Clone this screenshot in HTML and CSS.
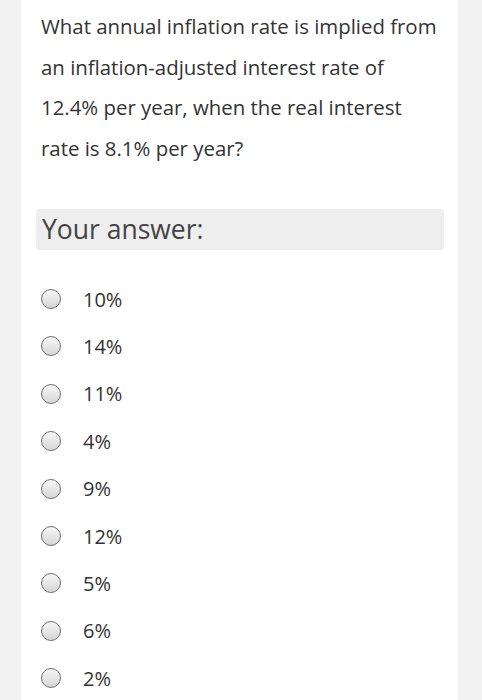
FILE: index.html
```html
<!DOCTYPE html>
<html>
<head>
<meta charset="utf-8">
<link rel="stylesheet" href="styles.css">
</head>
<body>
<div class="page">
  <div class="card">
    <p class="question">What annual inflation rate is implied from an inflation-adjusted interest rate of 12.4% per year, when the real interest rate is 8.1% per year?</p>
    <div class="answer-box">Your answer:</div>
    <ul class="options">
      <li class="option"><span class="radio"></span><span class="label">10%</span></li>
      <li class="option"><span class="radio"></span><span class="label">14%</span></li>
      <li class="option"><span class="radio"></span><span class="label">11%</span></li>
      <li class="option"><span class="radio"></span><span class="label">4%</span></li>
      <li class="option"><span class="radio"></span><span class="label">9%</span></li>
      <li class="option"><span class="radio"></span><span class="label">12%</span></li>
      <li class="option"><span class="radio"></span><span class="label">5%</span></li>
      <li class="option"><span class="radio"></span><span class="label">6%</span></li>
      <li class="option"><span class="radio"></span><span class="label">2%</span></li>
    </ul>
  </div>
</div>
</body>
</html>
```
FILE: styles.css
```css
html, body {
  margin: 0;
  padding: 0;
  background: #f2f2f2;
}
body {
  font-family: "Open Sans", "Noto Sans", sans-serif;
  color: #333333;
}
.page {
  display: flex;
  justify-content: flex-start;
  padding-left: 21px;
}
.card {
  width: 437px;
  min-height: 700px;
  background: #ffffff;
  box-sizing: border-box;
  padding: 0 14px 0 15px;
}
.question {
  margin: 0;
  padding: 6px 0 0 5px;
  font-size: 20.4px;
  line-height: 40.6px;
  color: #333333;
}
.answer-box {
  margin-top: 41px;
  height: 41px;
  background: #eeeeee;
  border-radius: 3px;
  font-size: 26.5px;
  line-height: 41px;
  padding-left: 6px;
  color: #444444;
}
.options {
  list-style: none;
  margin: 25px 0 0 0;
  padding: 0;
  display: flex;
  flex-direction: column;
}
.option {
  display: flex;
  align-items: center;
  height: 47.4px;
}
.radio {
  width: 18px;
  height: 18px;
  margin-left: 5px;
  border-radius: 50%;
  border: 1.5px solid #6f6f6f;
  background: linear-gradient(#f7f7f7, #d6d6d6);
  flex: none;
}
.label {
  margin-left: 22px;
  font-size: 20px;
  color: #333333;
}
```
